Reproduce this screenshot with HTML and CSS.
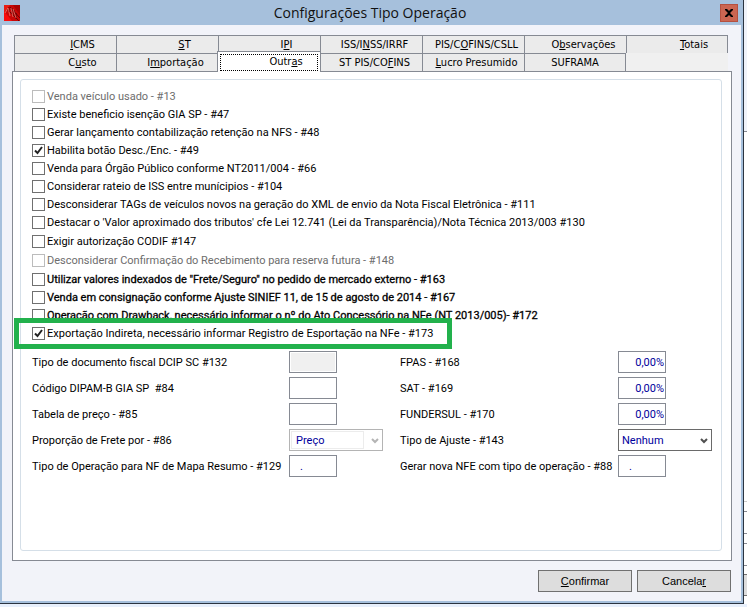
FILE: index.html
```
<!DOCTYPE html>
<html lang="pt-BR">
<head>
    <meta charset="UTF-8">
    <meta name="viewport" content="width=device-width, initial-scale=1.0">
    <title>Configurações Tipo Operação</title>
    <link rel="stylesheet" href="styles.css">
</head>
<body>
    <main class="window">
        <header class="titlebar">
            <svg class="logo" viewBox="0 0 16 16" aria-hidden="true">
                <rect width="16" height="16" fill="#c80808"/>
                <path d="M0 0h6L0 8z" fill="#e81c14"/>
                <path d="M9 0h7v10z" fill="#a80404"/>
                <path d="M0 6l8 10H0z" fill="#f80c0c"/>
                <path d="M3 4l12 12M6 2l10 11M5 2v5M8 3v6M10 5v6M12 8v6" fill="none" stroke="#5a0000" stroke-width=".8"/>
                <path d="M4 3L1 8M4 3l2 8M7 3l2 9M9 4l3 9" fill="none" stroke="#ff9a8c" stroke-width=".6"/>
            </svg>
            <h1>Configurações Tipo Operação</h1>
            <button class="close" type="button" aria-label="Fechar">
                <svg viewBox="0 0 8 8"><path d="M0 0h2l2 2 2-2h2v1L5 4l3 3v1H6L4 6 2 8H0V7l3-3-3-3z" fill="#000"/></svg>
            </button>
        </header>

        <form class="content">
            <div class="notebook">
                <nav class="tabs">
                    <button type="button" class="tab short"><span><u>I</u>CMS</span></button>
                    <button type="button" class="tab short"><span><u>S</u>T</span></button>
                    <button type="button" class="tab short"><span>I<u>P</u>I</span></button>
                    <button type="button" class="tab long"><span>ISS/I<u>N</u>SS/IRRF</span></button>
                    <button type="button" class="tab long"><span>PIS/C<u>O</u>FINS/CSLL</span></button>
                    <button type="button" class="tab medium"><span>O<u>b</u>servações</span></button>
                    <button type="button" class="tab short"><span><u>T</u>otais</span></button>
                    <button type="button" class="tab short"><span>C<u>u</u>sto</span></button>
                    <button type="button" class="tab medium"><span>I<u>m</u>portação</span></button>
                    <button type="button" class="tab short selected"><span>Outr<u>a</u>s</span></button>
                    <button type="button" class="tab long"><span>ST PIS/CO<u>F</u>INS</span></button>
                    <button type="button" class="tab long"><span><u>L</u>ucro Presumido</span></button>
                    <button type="button" class="tab"><span>SUFRAMA</span></button>
                </nav>

                <section class="panel">
                    <div class="group">
                        <div class="checks">
                            <label class="check disabled"><input type="checkbox" disabled>Venda veículo usado - #13</label>
                            <label class="check"><input type="checkbox">Existe beneficio isenção GIA SP - #47</label>
                            <label class="check"><input type="checkbox">Gerar lançamento contabilização retenção na NFS - #48</label>
                            <label class="check"><input type="checkbox" checked>Habilita botão Desc./Enc. - #49</label>
                            <label class="check"><input type="checkbox">Venda para Órgão Público conforme NT2011/004 - #66</label>
                            <label class="check"><input type="checkbox">Considerar rateio de ISS entre munícipios - #104</label>
                            <label class="check"><input type="checkbox">Desconsiderar TAGs de veículos novos na geração do XML de envio da Nota Fiscal Eletrônica - #111</label>
                            <label class="check tall"><input type="checkbox">Destacar o 'Valor aproximado dos tributos' cfe Lei 12.741 (Lei da Transparência)/Nota Técnica 2013/003 #130</label>
                            <label class="check tall"><input type="checkbox">Exigir autorização CODIF #147</label>
                            <label class="check tall disabled"><input type="checkbox" disabled>Desconsiderar Confirmação do Recebimento para reserva futura - #148</label>
                            <label class="check strong"><input type="checkbox">Utilizar valores indexados de "Frete/Seguro" no pedido de mercado externo - #163</label>
                            <label class="check strong"><input type="checkbox">Venda em consignação conforme Ajuste SINIEF 11, de 15 de agosto de 2014 - #167</label>
                            <label class="check strong"><input type="checkbox">Operação com Drawback, necessário informar o nº do Ato Concessório na NFe (NT 2013/005)- #172</label>
                            <label class="check marked"><input type="checkbox" checked>Exportação Indireta, necessário informar Registro de Esportação na NFe - #173</label>
                        </div>

                        <div class="fields">
                            <label for="dcip">Tipo de documento fiscal DCIP SC #132</label>
                            <input type="text" id="dcip" class="box" disabled>
                            <label for="fpas">FPAS - #168</label>
                            <input type="text" id="fpas" class="box number" value="0,00%">

                            <label for="dipam">Código DIPAM-B GIA SP&nbsp; #84</label>
                            <input type="text" id="dipam" class="box">
                            <label for="sat">SAT - #169</label>
                            <input type="text" id="sat" class="box number" value="0,00%">

                            <label for="tabela">Tabela de preço - #85</label>
                            <input type="text" id="tabela" class="box">
                            <label for="fundersul">FUNDERSUL - #170</label>
                            <input type="text" id="fundersul" class="box number" value="0,00%">

                            <label for="frete">Proporção de Frete por - #86</label>
                            <div class="combo off">
                                <select id="frete" disabled><option>Preço</option></select>
                                <svg viewBox="0 0 8 6"><path d="M1 1l3 3 3-3" fill="none" stroke="#b4b4b4" stroke-width="2"/></svg>
                            </div>
                            <label for="ajuste">Tipo de Ajuste - #143</label>
                            <div class="combo">
                                <select id="ajuste"><option>Nenhum</option></select>
                                <svg viewBox="0 0 8 6"><path d="M1 1l3 3 3-3" fill="none" stroke="#505050" stroke-width="2"/></svg>
                            </div>

                            <label for="mapa">Tipo de Operação para NF de Mapa Resumo - #129</label>
                            <input type="text" id="mapa" class="box code" value=".">
                            <label for="nfe">Gerar nova NFE com tipo de operação - #88</label>
                            <input type="text" id="nfe" class="box code" value=".">
                        </div>
                    </div>
                </section>
            </div>

            <footer class="actions">
                <button type="button"><span><u>C</u>onfirmar</span></button>
                <button type="button"><span>Cancela<u>r</u></span></button>
            </footer>
        </form>
    </main>

    <!-- edge of the window behind -->
    <div class="behind">
        <i class="toolbar"></i>
        <i class="page"></i>
        <i class="row"></i>
        <i class="row"></i>
        <i class="row"></i>
        <i class="row"></i>
        <i class="button-edge"></i>
    </div>
</body>
</html>
```
FILE: styles.css
```
*, *::before, *::after {
    box-sizing: border-box;
}
body {
    margin: 0;
    padding-bottom: 3px;
    min-height: 100vh;
    display: flex;
    background-color: #e8f0fc;
    color: #000;
    font-family: Roboto, Tahoma, sans-serif;
    font-size: 11px;
}
button, input, select {
    font: inherit;
    color: inherit;
    margin: 0;
    border-radius: 0;
}
u {
    text-underline-offset: 1px;
}

/* window */
.window {
    flex: 1;
    min-width: 0;
    display: flex;
    flex-direction: column;
    background-color: #a6c0dc;
    border-right: 1px solid #2b3440;
    border-bottom: 1px solid #2b3440;
}
.titlebar {
    display: flex;
    align-items: center;
    height: 25px;
    padding: 0 5px 0 4px;
}
.titlebar h1 {
    flex: 1;
    margin: 0;
    text-align: center;
    font-family: "Open Sans", "Noto Sans", sans-serif;
    font-size: 14px;
    font-weight: normal;
    line-height: 25px;
    color: #111;
}
.logo {
    width: 16px;
    height: 16px;
}
.close {
    display: flex;
    align-items: center;
    justify-content: center;
    width: 18px;
    height: 18px;
    padding: 0;
    background-color: #cb6551;
    border: 1px solid #b5503f;
}
.close svg {
    width: 8px;
    height: 8px;
}
.content {
    flex: 1;
    display: flex;
    flex-direction: column;
    margin: 0 2px 2px;
    padding: 10px 10px 9px;
    background-color: #f2f3f9;
}
.notebook {
    flex: 1;
    display: flex;
    flex-direction: column;
    margin-right: -1px;
}

/* tabs */
.tabs {
    display: grid;
    grid-template-columns: repeat(7, 1fr);
    margin: 0 4px 0 2px;
    background-color: #f0f0f0;
    font-family: "DejaVu Sans Condensed", Tahoma, sans-serif;
}
.tab {
    height: 18px;
    padding: 0;
    background-color: #ebebeb;
    border: solid #868a93;
    border-width: 1px 0 0 1px;
    line-height: 16px;
    white-space: nowrap;
}
.tab:nth-child(7), .tab:last-child {
    border-right: 1px solid #868a93;
}
.short {
    padding-left: 34px;
}
.medium {
    padding-left: 16px;
}
.long {
    padding-left: 6px;
}
.selected {
    position: relative;
    z-index: 1;
    height: 21px;
    margin: -2px -1px -1px;
    padding: 0;
    background-color: #fff;
    border-width: 1px 1px 0;
}
.selected span {
    display: block;
    height: 17px;
    margin: 0 2px;
    padding-left: 34px;
    border: 1px dotted #000;
    line-height: 14px;
}

/* page */
.panel {
    flex: 1;
    display: flex;
    padding: 7px 9px 9px 7px;
    background-color: #fff;
    border: 1px solid #868a93;
}
.group {
    flex: 1;
    padding: 7px 9px 7px 11px;
    border: 1px solid #d5dfe8;
    border-radius: 3px;
}
.check {
    display: flex;
    align-items: center;
    gap: 2px;
    height: 18px;
    white-space: nowrap;
}
.tall {
    height: 19px;
}
.check input {
    appearance: none;
    flex: none;
    width: 13px;
    height: 13px;
    background: #fff;
    border: 1px solid #707070;
}
.check input:checked {
    background: #fff url("data:image/svg+xml,%3Csvg xmlns='http://www.w3.org/2000/svg' viewBox='0 0 11 11'%3E%3Cpath d='M2 5.5l2.500 2.500L9 2' fill='none' stroke='%23222' stroke-width='2'/%3E%3C/svg%3E");
}
.disabled {
    color: #6d6d6d;
}
.disabled input {
    border-color: #bcbcbc;
}
.strong {
    -webkit-text-stroke: 0.3px #000;
}
.marked {
    position: relative;
}
.marked::after {
    content: "";
    position: absolute;
    top: -6px;
    left: -18px;
    width: 438px;
    height: 31px;
    border: 5px solid #22b14c;
}

.fields {
    display: grid;
    grid-template-columns: 257fr 111fr 218fr 94fr;
    row-gap: 4px;
    align-items: center;
    padding-top: 9px;
}
.fields label {
    min-width: 0;
    white-space: nowrap;
}
.box {
    width: 48px;
    height: 22px;
    padding: 0 1px;
    background-color: #fff;
    border: 1px solid #868a93;
    color: #00009c;
}
.box:disabled {
    background-color: #f0f0f0;
    box-shadow: inset 0 0 0 1px #fff;
}
.number {
    text-align: right;
}
.code {
    padding-left: 10px;
}
.combo {
    position: relative;
    width: 94px;
}
.combo select {
    appearance: none;
    display: block;
    width: 100%;
    height: 22px;
    padding: 0 18px 0 3px;
    background-color: #fff;
    border: 1px solid #6a6a6a;
    color: #00009c;
}
.off select {
    padding-left: 6px;
    border-color: #b4b4b4;
    opacity: 1;
}
.off::before {
    content: "";
    position: absolute;
    inset: 2px 19px 2px 2px;
    border: 1px solid #ececec;
}
.combo svg {
    position: absolute;
    top: 9px;
    right: 4px;
    width: 8px;
    height: 6px;
    pointer-events: none;
}

/* buttons */
.actions {
    display: flex;
    justify-content: flex-end;
    gap: 5px;
    padding-top: 9px;
}
.actions button {
    width: 94px;
    height: 22px;
    padding: 0;
    background-color: #ddd;
    border: 1px solid #707070;
    font-family: "Liberation Sans", Arial, sans-serif;
    font-size: 11px;
}

.behind {
    display: flex;
    flex-direction: column;
    width: 3px;
    background-color: #fff;
}
.toolbar {
    height: 132px;
    background-color: #f0f3fa;
    border-bottom: 1px solid #868a93;
}
.page {
    flex: 1;
    border-bottom: 1px solid #ccc;
}
.row {
    height: 22px;
    border-bottom: 1px solid #868a93;
}
.row:nth-child(3), .row:nth-child(5) {
    height: 10px;
}
.button-edge {
    height: 22px;
    margin: 8px 0;
    background-color: #ddd;
    border: solid #707070;
    border-width: 1px 0;
}
```
